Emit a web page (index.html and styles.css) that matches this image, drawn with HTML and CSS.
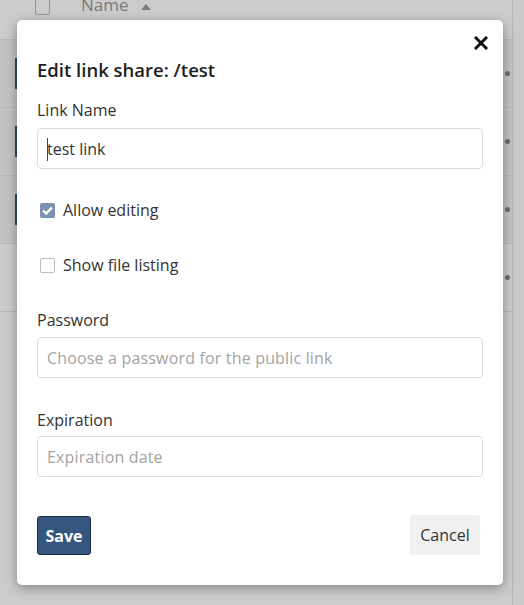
FILE: index.html
```html
<!DOCTYPE html>
<html lang="en">
<head>
<meta charset="utf-8">
<title>Edit link share</title>
<link rel="stylesheet" href="styles.css">
</head>
<body>
<div class="app">
  <div class="page">
    <div class="list-head">
      <span class="head-check"></span>
      <span class="head-name">Name</span>
      <svg class="sort" width="10" height="6" viewBox="0 0 10 6"><path d="M0 6 L5 0 L10 6 Z" fill="#9a9a9a"/></svg>
    </div>
    <div class="row selected"><span class="marker"></span><span class="dot"></span></div>
    <div class="row selected"><span class="marker"></span><span class="dot"></span></div>
    <div class="row selected"><span class="marker"></span><span class="dot"></span></div>
    <div class="row"><span class="marker hidden"></span><span class="dot"></span></div>
  </div>
  <div class="scrollbar"></div>
</div>
<div class="backdrop"></div>
<div class="modal">
  <div class="close-row">
    <svg class="close" width="14" height="14" viewBox="0 0 14 14"><path d="M2 2 L12 12 M12 2 L2 12" stroke="#111" stroke-width="3" stroke-linecap="square"/></svg>
  </div>
  <h2 class="title">Edit link share: /test</h2>
  <div class="label first">Link Name</div>
  <div class="field"><span class="caret"></span><span class="value">test link</span></div>
  <div class="check-row first-check"><span class="box checked"><svg width="15" height="15" viewBox="0 0 15 15"><path d="M3.2 7.6 L6.2 10.6 L11.8 4.6" stroke="#fff" stroke-width="2.4" fill="none"/></svg></span><span>Allow editing</span></div>
  <div class="check-row"><span class="box"></span><span>Show file listing</span></div>
  <div class="label pw">Password</div>
  <div class="field pw-field"><span class="placeholder">Choose a password for the public link</span></div>
  <div class="label exp">Expiration</div>
  <div class="field exp-field"><span class="placeholder">Expiration date</span></div>
  <div class="actions">
    <button class="btn save">Save</button>
    <button class="btn cancel">Cancel</button>
  </div>
</div>
</body>
</html>
```
FILE: styles.css
```css
html, body {
  margin: 0;
  padding: 0;
}
body {
  width: 524px;
  height: 605px;
  overflow: hidden;
  font-family: "Open Sans", "Liberation Sans", sans-serif;
  background: #fff;
  position: relative;
}
.app {
  display: flex;
  height: 605px;
}
.page {
  width: 512px;
}
.scrollbar {
  width: 11px;
  border-left: 1px solid #e4e4e4;
  background: #fdfdfd;
}
.list-head {
  height: 39px;
  border-bottom: 1px solid #e6e6e6;
  display: flex;
  align-items: flex-start;
}
.head-check {
  width: 13px;
  height: 15px;
  margin-left: 35px;
  margin-top: -2px;
  border: 1px solid #b8b8b8;
  border-radius: 2px;
  background: #fff;
}
.head-name {
  margin-left: 31px;
  margin-top: -7px;
  font-size: 17px;
  line-height: 24px;
  color: #9a9a9a;
}
.sort {
  margin-left: 12px;
  margin-top: 4px;
}
.row {
  height: 67px;
  border-bottom: 1px solid #e6e6e6;
  display: flex;
  align-items: center;
  justify-content: space-between;
  background: #fff;
}
.row.selected {
  background: #f4f4f4;
}
.marker {
  width: 3px;
  height: 31px;
  margin-left: 15px;
  background: #3b5e8c;
}
.marker.hidden {
  visibility: hidden;
}
.dot {
  width: 5px;
  height: 5px;
  border-radius: 50%;
  background: #888;
  margin-right: 2px;
}
.backdrop {
  position: absolute;
  inset: 0;
  background: rgba(0, 0, 0, 0.2);
}
.modal {
  position: absolute;
  top: 20px;
  left: 17px;
  width: 486px;
  box-sizing: border-box;
  padding: 16px 20px 30px;
  background: #fff;
  border-radius: 5px;
  box-shadow: 0 3px 12px rgba(0, 0, 0, 0.35);
  color: #333;
}
.close-row {
  display: flex;
  justify-content: flex-end;
  height: 14px;
  margin-right: -5px;
}
.title {
  margin: 8px 0 0;
  font-size: 18.5px;
  line-height: 24px;
  font-weight: 600;
  color: #1e1e1e;
}
.label {
  font-size: 16px;
  line-height: 24px;
  color: #333;
  margin-bottom: 6px;
}
.label.first {
  margin-top: 16px;
}
.label.pw {
  margin-top: 31px;
  margin-bottom: 5px;
}
.label.exp {
  margin-top: 30px;
  margin-bottom: 4px;
}
.field {
  height: 41px;
  box-sizing: border-box;
  border: 1px solid #dcdcdc;
  border-radius: 4px;
  padding: 0 9px;
  display: flex;
  align-items: center;
  font-size: 16px;
  color: #333;
  position: relative;
}
.caret {
  position: absolute;
  left: 9px;
  top: 9px;
  width: 1px;
  height: 23px;
  background: #444;
}
.placeholder {
  color: #a3a3a3;
  letter-spacing: 0.17px;
  padding-top: 1px;
}
.check-row {
  display: flex;
  align-items: center;
  height: 24px;
  margin-top: 31px;
  font-size: 16px;
  color: #333;
  padding-left: 3px;
}
.check-row.first-check {
  margin-top: 29px;
}
.box {
  width: 13px;
  height: 13px;
  border: 1px solid #bdbdbd;
  border-radius: 2px;
  margin-right: 8px;
  background: #fff;
  display: flex;
}
.box.checked {
  width: 15px;
  height: 15px;
  border: none;
  background: #7d92b2;
}
.actions {
  margin-top: 38px;
  display: flex;
  justify-content: space-between;
  align-items: center;
  padding-right: 3px;
}
.btn {
  font-family: "Open Sans", "Liberation Sans", sans-serif;
  font-size: 16px;
  height: 39px;
  border-radius: 3px;
  cursor: pointer;
}
.save {
  width: 54px;
  padding: 0;
  background: #34567f;
  border: 1px solid #1b2e47;
  color: #fff;
  font-weight: 700;
  margin-top: 1px;
}
.cancel {
  width: 70px;
  padding: 0;
  border: none;
  background: #f0f0f0;
  color: #333;
  height: 40px;
}
```
